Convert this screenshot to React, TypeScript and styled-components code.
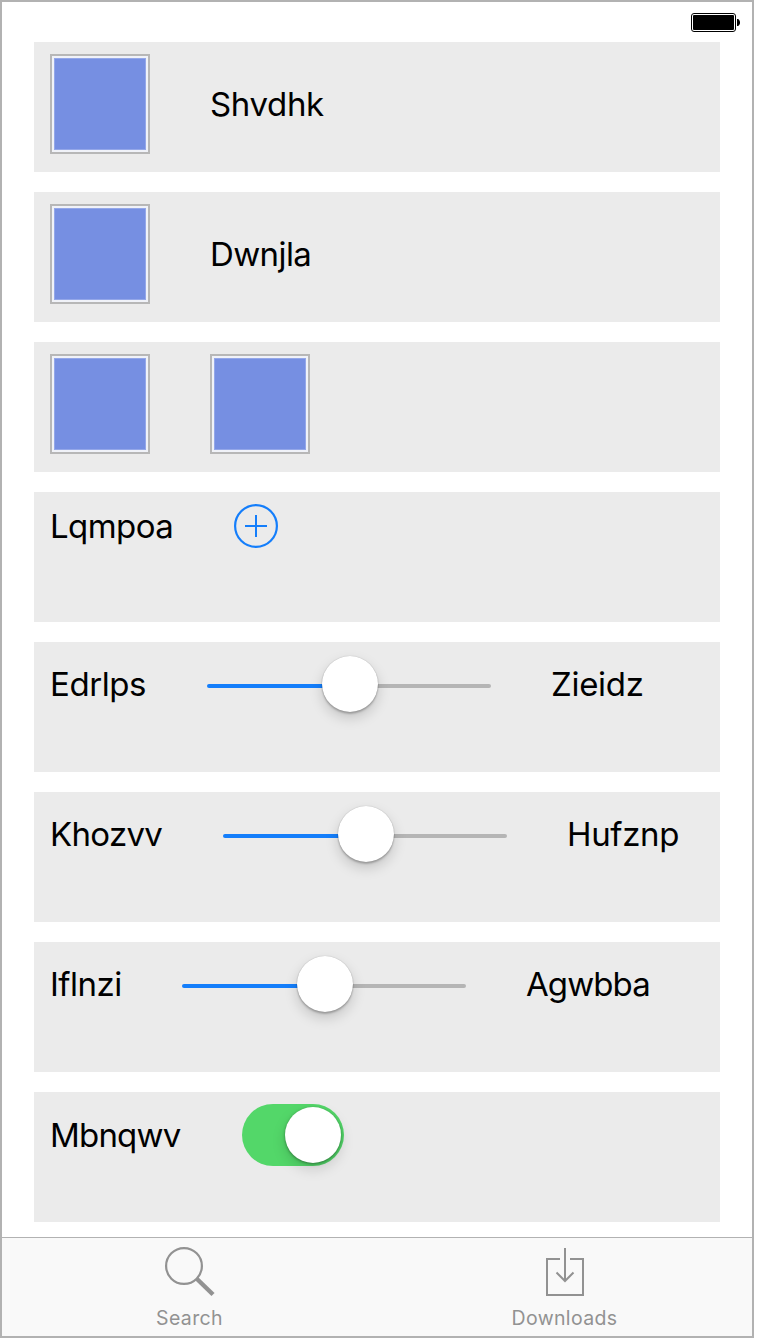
import React from "react";
import styled, { createGlobalStyle } from "styled-components";

const GlobalStyle = createGlobalStyle`
  *, *::after { box-sizing: border-box; }
  body { margin: 0; background: #fff; }
`;

const Device = styled.main`
  display: flex;
  flex-direction: column;
  width: 754px;
  height: 1338px;
  border: 2px solid #b2b2b2;
  background: #fff;
  color: #000;
  font-family: Inter, "Liberation Sans", sans-serif;
`;

const StatusBar = styled.header`
  display: flex;
  justify-content: flex-end;
  height: 40px;
  padding: 11px 12px 0 0;
`;

const RowList = styled.section`
  display: flex;
  flex-direction: column;
  gap: 20px;
  flex: 1;
  padding: 0 32px;
`;

const Row = styled.div`
  display: flex;
  align-items: flex-start;
  height: 130px;
  padding: 12px 16px;
  background: #ebebeb;
`;

const RowContent = styled.div`
  display: flex;
  align-items: center;
  gap: 60px;
`;

const Label = styled.span<{ $width: number; $spacing: number }>`
  width: ${(p) => p.$width}px;
  font-size: 33px;
  line-height: 41px;
  letter-spacing: ${(p) => p.$spacing}px;
  white-space: nowrap;
`;

const Swatch = styled.div`
  width: 100px;
  height: 100px;
  padding: 2px;
  border: 2px solid #b7b7b7;
  background: #f0f2f8;

  &::after {
    content: "";
    display: block;
    height: 92px;
    border: 1px solid #94a7e9;
    background: #768fe2;
  }
`;

const IconButton = styled.button`
  width: 44px;
  height: 44px;
  padding: 0;
  border: 0;
  background: none;
  svg { display: block; }
`;

const SliderBox = styled.div`
  position: relative;
  display: flex;
  align-items: center;
  width: 284px;
  height: 60px;
  padding-top: 4px;
`;

const Track = styled.div`
  width: 100%;
  height: 4px;
  border-radius: 2px;
  background: linear-gradient(to right, #147efb 50%, #b5b5b5 50%);
`;

const SliderThumb = styled.div`
  position: absolute;
  top: 2px;
  left: 115px;
  width: 56px;
  height: 56px;
  border-radius: 50%;
  background: #fff;
  box-shadow: 0 0 1px rgba(0, 0, 0, 0.3), 0 2px 2px rgba(0, 0, 0, 0.22), 0 6px 13px rgba(0, 0, 0, 0.17);
`;

const Switch = styled.div`
  display: flex;
  justify-content: flex-end;
  width: 102px;
  height: 62px;
  padding: 3px;
  border-radius: 31px;
  background: #53d769;
`;

const SwitchKnob = styled.div`
  width: 56px;
  height: 56px;
  border-radius: 50%;
  background: #fff;
  box-shadow: 0 1px 3px rgba(0, 0, 0, 0.38), 0 6px 14px rgba(0, 0, 0, 0.15);
`;

const TabBar = styled.nav`
  display: flex;
  height: 99px;
  border-top: 1px solid #b2b2b2;
  background: #f9f9f9;
`;

const Tab = styled.div`
  display: flex;
  flex: 1;
  flex-direction: column;
  align-items: center;
  padding-top: 8px;
  color: #929292;
  svg { display: block; }
`;

const TabLabel = styled.span`
  margin-top: 8px;
  font-size: 19.5px;
  line-height: 24px;
  letter-spacing: 0.35px;
`;

const Battery = () => (
  <svg width="50" height="19" viewBox="0 0 50 19">
    <rect x="1.5" y="0.5" width="44" height="18" rx="2.5" fill="#fff" stroke="#000" />
    <rect x="3" y="2" width="41" height="15" rx="1" fill="#000" />
    <path d="M47 6h1c2.7 1.5 2.7 5.500 0 7h-1Z" fill="#000" />
  </svg>
);

const AddIcon = () => (
  <svg width="44" height="44" viewBox="0 0 44 44" fill="none" stroke="#147efb" strokeWidth="2">
    <circle cx="22" cy="22" r="20.9" strokeWidth="2.2" />
    <path d="M11 22h22M22 11v22" />
  </svg>
);

const SearchIcon = () => (
  <svg width="51" height="52" viewBox="0 0 51 52" fill="none" stroke="currentColor">
    <circle cx="20" cy="20" r="17.9" strokeWidth="2.2" />
    <path d="M32.5 32.5L49 48.500" strokeWidth="4.400" />
  </svg>
);

const DownloadIcon = () => (
  <svg width="51" height="52" viewBox="0 0 51 52" fill="none" stroke="currentColor" strokeWidth="2">
    <path d="M21 13H8v36h36V13H31" />
    <path d="M26 2v33M17.5 26.5L26 35l8.5-8.5" />
  </svg>
);

const Slider = () => (
  <SliderBox>
    <Track />
    <SliderThumb />
  </SliderBox>
);

const sliders = [
  { left: "Edrlps", leftWidth: 97, leftSpacing: -0.42, right: "Zieidz", rightWidth: 92, rightSpacing: -0.3 },
  { left: "Khozvv", leftWidth: 113, leftSpacing: -0.68, right: "Hufznp", rightWidth: 112, rightSpacing: -0.35 },
  { left: "Iflnzi", leftWidth: 72, leftSpacing: -0.5, right: "Agwbba", rightWidth: 123, rightSpacing: -0.9 },
];

export default function App() {
  return (
    <>
      <GlobalStyle />
      <Device>
        <StatusBar><Battery /></StatusBar>
        <RowList>
          <Row><RowContent><Swatch /><Label $width={114} $spacing={-0.35}>Shvdhk</Label></RowContent></Row>
          <Row><RowContent><Swatch /><Label $width={102} $spacing={-0.6}>Dwnjla</Label></RowContent></Row>
          <Row><RowContent><Swatch /><Swatch /></RowContent></Row>
          <Row>
            <RowContent>
              <Label $width={124} $spacing={-0.58}>Lqmpoa</Label>
              <IconButton aria-label="Add"><AddIcon /></IconButton>
            </RowContent>
          </Row>
          {sliders.map((s) => (
            <Row key={s.left}>
              <RowContent>
                <Label $width={s.leftWidth} $spacing={s.leftSpacing}>{s.left}</Label>
                <Slider />
                <Label $width={s.rightWidth} $spacing={s.rightSpacing}>{s.right}</Label>
              </RowContent>
            </Row>
          ))}
          <Row>
            <RowContent>
              <Label $width={132} $spacing={-0.8}>Mbnqwv</Label>
              <Switch><SwitchKnob /></Switch>
            </RowContent>
          </Row>
        </RowList>
        <TabBar>
          <Tab><SearchIcon /><TabLabel>Search</TabLabel></Tab>
          <Tab><DownloadIcon /><TabLabel>Downloads</TabLabel></Tab>
        </TabBar>
      </Device>
    </>
  );
}
